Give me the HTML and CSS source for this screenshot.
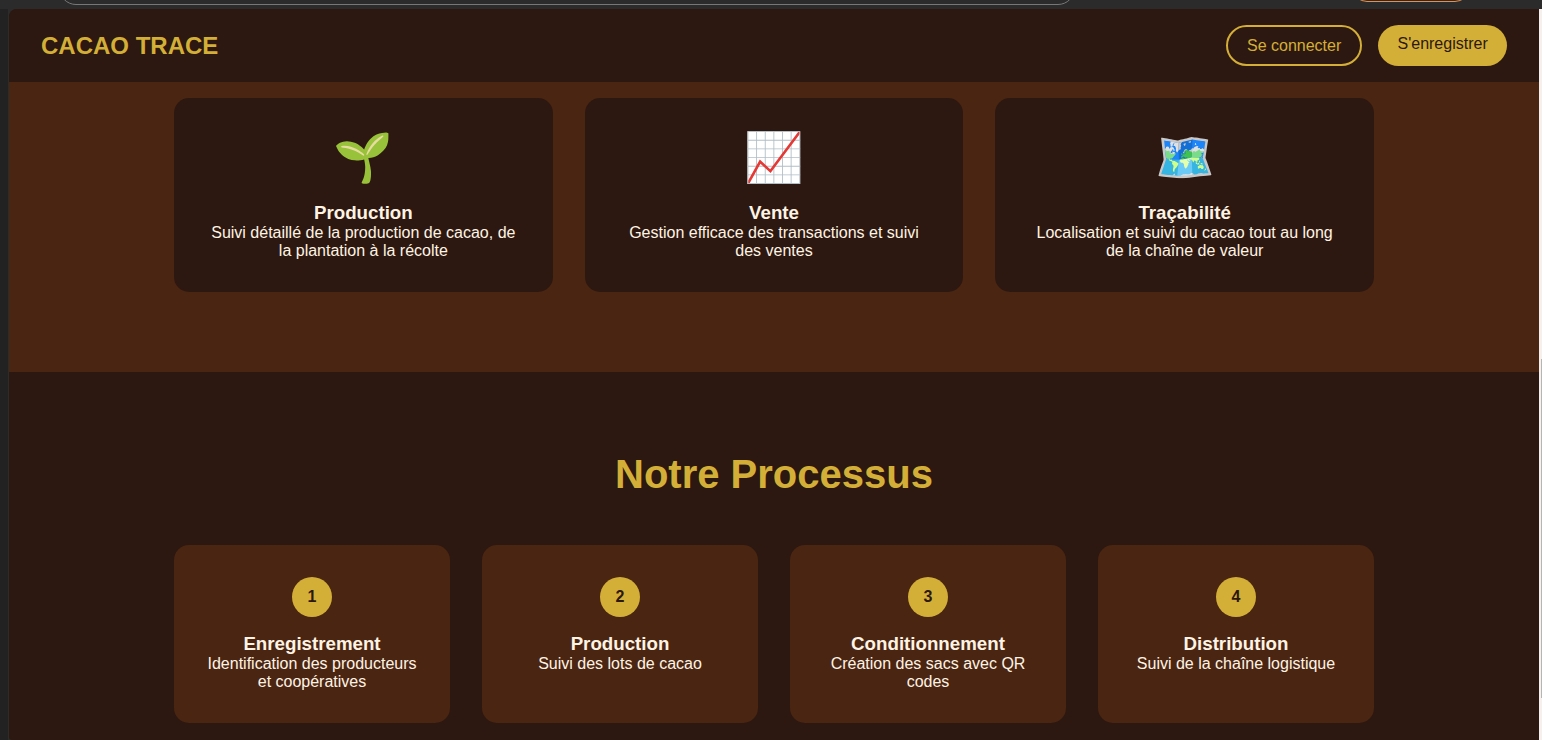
FILE: index.html
```html
<!DOCTYPE html>
<html lang="fr">
<head>
<meta charset="utf-8">
<title>Cacao Trace</title>
<link rel="stylesheet" href="styles.css">
</head>
<body>
<div class="browser-bar"><div class="address"></div><div class="pill"></div></div>
<div class="window">
<div class="side"></div>
<div class="page">
  <header class="nav">
    <div class="logo">CACAO TRACE</div>
    <nav class="actions"><a class="btn outline">Se connecter</a><a class="btn solid">S'enregistrer</a></nav>
  </header>
  <section class="features">
    <div class="grid three">
      <article class="card dark">
        <div class="icon">🌱</div>
        <h3>Production</h3>
        <p>Suivi détaillé de la production de cacao, de la plantation à la récolte</p>
      </article>
      <article class="card dark">
        <div class="icon">📈</div>
        <h3>Vente</h3>
        <p>Gestion efficace des transactions et suivi des ventes</p>
      </article>
      <article class="card dark">
        <div class="icon">🗺️</div>
        <h3>Traçabilité</h3>
        <p>Localisation et suivi du cacao tout au long de la chaîne de valeur</p>
      </article>
    </div>
  </section>
  <section class="process">
    <h2>Notre Processus</h2>
    <div class="grid four">
      <article class="card brown"><div class="number">1</div><h3>Enregistrement</h3><p>Identification des producteurs et coopératives</p></article>
      <article class="card brown"><div class="number">2</div><h3>Production</h3><p>Suivi des lots de cacao</p></article>
      <article class="card brown"><div class="number">3</div><h3>Conditionnement</h3><p>Création des sacs avec QR codes</p></article>
      <article class="card brown"><div class="number">4</div><h3>Distribution</h3><p>Suivi de la chaîne logistique</p></article>
    </div>
  </section>
</div>
<div class="scroll"><div class="thumb"></div></div>
</div>
</body>
</html>
```
FILE: styles.css
```css
* { box-sizing: border-box; margin: 0; padding: 0; }
body { height: 740px; overflow: hidden; background: #2b2b2b; font: 16px "Liberation Sans", Arial, sans-serif; color: #fff3e4; }
.browser-bar { height: 9px; background: #2b2b2b; display: flex; align-items: flex-start; overflow: hidden; }
.address { width: 1016px; height: 34px; margin: -29px 0 0 59px; border: 1px solid #777; border-radius: 17px; flex: none; }
.pill { width: 118px; height: 30px; margin: -28px 0 0 277px; border: 1px solid #e78d4d; border-radius: 15px; flex: none; }
.window { display: flex; height: 731px; }
.side { width: 9px; background: #222; border-right: 1px solid #2b2d2c; }
.page { width: 1530px; height: 731px; overflow: hidden; background: #2c1810; border-radius: 8px 0 0 3px; }
.nav { height: 73px; padding: 16px 32px; display: flex; justify-content: space-between; align-items: center; background: #2c1810; }
.logo { font-size: 24px; font-weight: bold; color: #d4af37; }
.actions { display: flex; gap: 16px; height: 41px; }
.btn { height: 41px; line-height: 18px; border-radius: 25px; white-space: nowrap; }
.outline { width: 136px; padding: 10px 0 0 19px; border: 2px solid #d4af37; color: #d4af37; }
.solid { width: 129px; padding: 10px 0 0 19.5px; background: #d4af37; color: #2c1810; }
.features { height: 290px; padding-top: 16px; background: #4a2512; }
.process { padding-top: 80px; background: #2c1810; }
h2 { height: 45px; line-height: 45px; margin-bottom: 48px; font-size: 40px; text-align: center; color: #d4af37; }
.grid { display: grid; gap: 32px; width: 1200px; margin: 0 auto; }
.three { grid-template-columns: repeat(3, 1fr); }
.four { grid-template-columns: repeat(4, 1fr); }
.card { padding: 32px; border-radius: 15px; text-align: center; }
.dark { background: #2c1810; }
.brown { background: #4a2512; }
.icon { height: 56px; margin: 0 auto 16px; font-size: 48px; line-height: 56px; }
h3 { font-size: 18.72px; line-height: 22px; }
p { line-height: 18px; }
.number { width: 40px; height: 40px; margin: 0 auto 16px; border-radius: 50%; background: #d4af37; color: #2c1810; font-weight: bold; line-height: 40px; }
.scroll { width: 3px; background: #f5f0ee; padding: 350px 0 0 2px; }
.thumb { height: 339px; background: #b5b5b5; }
```
